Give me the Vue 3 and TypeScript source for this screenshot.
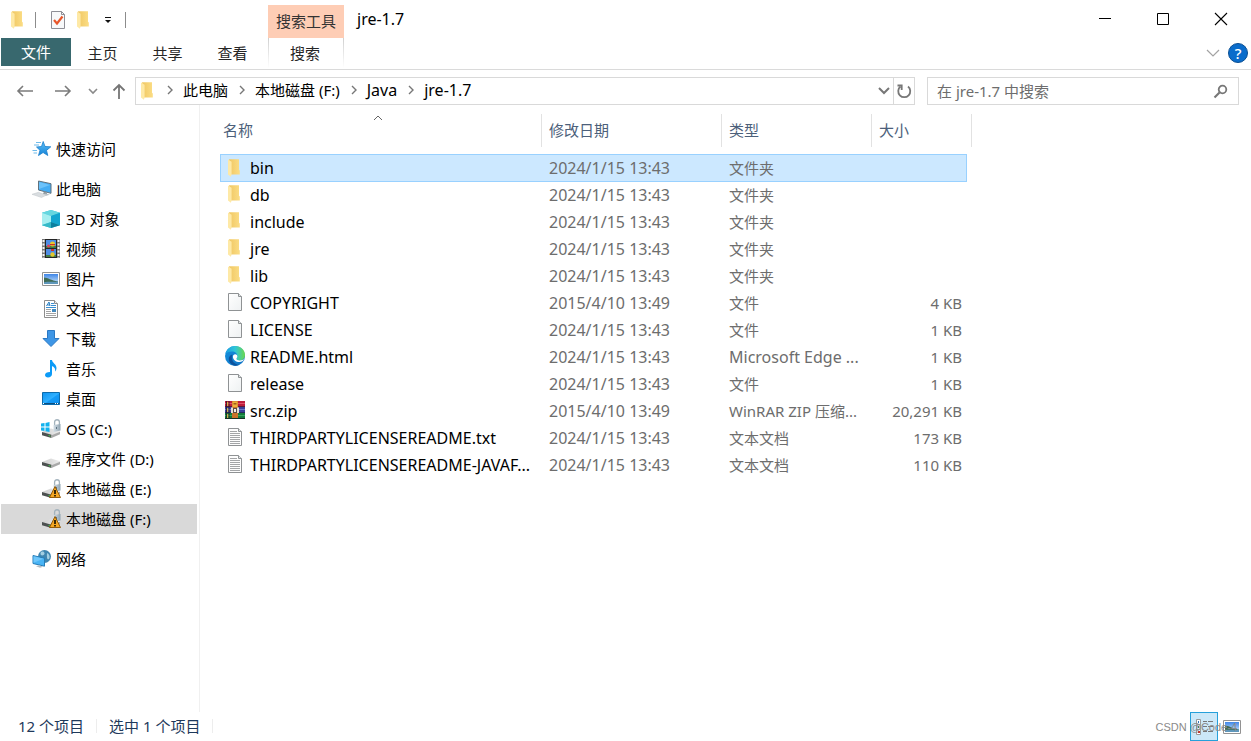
<script setup lang="ts">
import { ref } from 'vue'

interface NavItem {
  label: string
  icon: string
  level: number
  gap?: boolean
}
interface FileRow {
  name: string
  icon: string
  date: string
  type: string
  size: string
}

const title = 'jre-1.7'
const tabs: string[] = ['主页', '共享', '查看']
const crumbs: string[] = ['此电脑', '本地磁盘 (F:)', 'Java', 'jre-1.7']
const query = ref('')
const current = ref('本地磁盘 (F:)')
const selected = ref('bin')

const isLatin = (s: string): boolean => /^[\x20-\x7e]*$/.test(s)

const nav: NavItem[] = [
  { label: '快速访问', icon: 'star', level: 0 },
  { label: '此电脑', icon: 'pc', level: 0, gap: true },
  { label: '3D 对象', icon: 'cube', level: 1 },
  { label: '视频', icon: 'video', level: 1 },
  { label: '图片', icon: 'picture', level: 1 },
  { label: '文档', icon: 'doc', level: 1 },
  { label: '下载', icon: 'download', level: 1 },
  { label: '音乐', icon: 'music', level: 1 },
  { label: '桌面', icon: 'desktop', level: 1 },
  { label: 'OS (C:)', icon: 'osdrive', level: 1 },
  { label: '程序文件 (D:)', icon: 'drive', level: 1 },
  { label: '本地磁盘 (E:)', icon: 'warndrive', level: 1 },
  { label: '本地磁盘 (F:)', icon: 'warndrive', level: 1 },
  { label: '网络', icon: 'network', level: 0, gap: true },
]

const columns: string[] = ['名称', '修改日期', '类型', '大小']
const late = '2024/1/15 13:43'
const early = '2015/4/10 13:49'
const files: FileRow[] = [
  { name: 'bin', icon: 'folder', date: late, type: '文件夹', size: '' },
  { name: 'db', icon: 'folder', date: late, type: '文件夹', size: '' },
  { name: 'include', icon: 'folder', date: late, type: '文件夹', size: '' },
  { name: 'jre', icon: 'folder', date: late, type: '文件夹', size: '' },
  { name: 'lib', icon: 'folder', date: late, type: '文件夹', size: '' },
  { name: 'COPYRIGHT', icon: 'blank', date: early, type: '文件', size: '4 KB' },
  { name: 'LICENSE', icon: 'blank', date: late, type: '文件', size: '1 KB' },
  { name: 'README.html', icon: 'edge', date: late, type: 'Microsoft Edge ...', size: '1 KB' },
  { name: 'release', icon: 'blank', date: late, type: '文件', size: '1 KB' },
  { name: 'src.zip', icon: 'rar', date: early, type: 'WinRAR ZIP 压缩...', size: '20,291 KB' },
  { name: 'THIRDPARTYLICENSEREADME.txt', icon: 'text', date: late, type: '文本文档', size: '173 KB' },
  { name: 'THIRDPARTYLICENSEREADME-JAVAF...', icon: 'text', date: late, type: '文本文档', size: '110 KB' },
]
</script>

<template>
  <div class="window">
    <svg class="defs" aria-hidden="true">
      <defs>
        <linearGradient id="gFolder" x1="0" x2="1"><stop offset="0" stop-color="#f0c763" /><stop offset="1" stop-color="#fbdd85" /></linearGradient>
        <linearGradient id="gStar" x1="0" y1="0" x2="0" y2="1"><stop offset="0" stop-color="#5cc0f7" /><stop offset="1" stop-color="#1583d8" /></linearGradient>
        <linearGradient id="gSky" x1="0" y1="0" x2="0" y2="1"><stop offset="0" stop-color="#3f86e8" /><stop offset="1" stop-color="#d4ecfb" /></linearGradient>
        <linearGradient id="gDesk" x1="0" y1="0" x2="1" y2="1"><stop offset="0" stop-color="#0e93f0" /><stop offset="0.5" stop-color="#2fb0ff" /><stop offset="0.55" stop-color="#149bf8" /><stop offset="1" stop-color="#0f8fee" /></linearGradient>
        <linearGradient id="gPaper" x1="0" y1="0" x2="1" y2="1"><stop offset="0" stop-color="#ffffff" /><stop offset="1" stop-color="#eef1f2" /></linearGradient>
        <linearGradient id="gEdgeTop" x1="0" x2="1"><stop offset="0" stop-color="#1b9de2" /><stop offset="0.5" stop-color="#2fc6d8" /><stop offset="1" stop-color="#6bd84b" /></linearGradient>
        <linearGradient id="gEdgeLow" x1="0" y1="0" x2="1" y2="1"><stop offset="0" stop-color="#1390de" /><stop offset="1" stop-color="#1273c4" /></linearGradient>
        <linearGradient id="gLock" x1="0" x2="1"><stop offset="0" stop-color="#d3dee6" /><stop offset="1" stop-color="#8fa3b1" /></linearGradient>
        <linearGradient id="gDrive" x1="0" x2="1"><stop offset="0" stop-color="#cfcfcf" /><stop offset="1" stop-color="#ececec" /></linearGradient>
      </defs>
      <symbol id="i-folder" viewBox="0 0 20 20">
        <path d="M4 1.200h10v10.500l.8.900v4H6z" fill="url(#gFolder)" />
        <path d="M3 1.500 6.600 3.700v12.800l-.7 2.200L3 16.500z" fill="#fee9a6" />
      </symbol>
      <symbol id="i-blank" viewBox="0 0 20 20">
        <path d="M3.500 1.500h10l3 3v14h-13z" fill="url(#gPaper)" stroke="#8f9294" />
        <path d="M13.500 1.500v3h3" fill="#e2e5e6" stroke="#8f9294" />
      </symbol>
      <symbol id="i-text" viewBox="0 0 20 20">
        <path d="M3.500 1.500h10l3 3v14h-13z" fill="#fdfdfd" stroke="#8f9294" />
        <path d="M13.500 1.500v3h3" fill="#e2e5e6" stroke="#8f9294" />
        <path d="M5 4.500h7M5 6.500h10M5 8.500h10M5 10.500h10M5 12.500h10M5 14.500h10M5 16.500h10" stroke="#a3a5a7" fill="none" />
      </symbol>
      <symbol id="i-edge" viewBox="0 0 20 20">
        <circle cx="10" cy="10" r="10" fill="url(#gEdgeLow)" />
        <path d="M.3 8C1.500 3 5.300 0 10 0c6 0 10 4.300 10 9 0 3.500-2.500 5.500-5.500 5.500-2 0-3-.8-3-1.600 0-.7.9-1 .9-2.800C12.400 7.500 10 5.500 7 5.500 4 5.500 1.500 6.500.3 8z" fill="url(#gEdgeTop)" />
        <path d="M7.500 8.500c-2 4 .5 10 7 10.300-5 2.700-10.500-.8-10.700-5.500C3.700 11 5 9 7.500 8.500z" fill="#0d539d" />
        <path d="M10.200 8.200c1.500 0 2.300 1 2.200 2.400-.1 1-.9 1.400-.9 2.200 0 .9 1.200 1.700 3.200 1.700 2 0 3.600-.8 4.500-1.700-.8 2.200-2.700 3.300-4.700 3.300-3.600 0-6.600-2.300-6.600-5.300 0-1.500.9-2.600 2.300-2.600z" fill="#fff" />
      </symbol>
      <symbol id="i-rar" viewBox="0 0 20 20">
        <path d="M0 1h20v6H0z" fill="#bd1c3c" /><path d="M0 3h20v1H0z" fill="#e0506a" />
        <path d="M0 7h20v6H0z" fill="#39409a" /><path d="M0 9h20v1H0z" fill="#6b77c9" />
        <path d="M0 13h20v6H0z" fill="#137a3b" /><path d="M0 15h20v1H0z" fill="#36a35c" />
        <path d="M0 6.500h20M0 12.500h20" stroke="#1c1836" stroke-width=".6" />
        <path d="M1.500 1v18M4 1v18" stroke="#221b2a" stroke-width=".8" />
        <path d="M2.700 2v4M2.700 8v4M2.700 14v4" stroke="#e8c34a" />
        <path d="M7 1h6v18H7z" fill="#c9722a" /><path d="M7.500 1.500h5V7h-5z" fill="#eeb03c" />
        <path d="M8.500 3h3v1.500h-3z" fill="#a05c1c" />
        <path d="M6 7.500h2V13H6zM12 7.500h2V13h-2z" fill="#e4dfd6" /><path d="M8 8h4v5H8z" fill="#5b4c43" /><path d="M9 9h2v3H9z" fill="#f5f0e6" />
        <path d="M0 18.500h20" stroke="#163024" />
      </symbol>
      <symbol id="i-star" viewBox="0 0 20 20">
        <path d="M11.200 2.500 13 7.500l5.800.3-4.300 3.600 1.300 5.100-4.700-3-4.600 3L8 11.300 4.500 8l5-.5z" fill="url(#gStar)" stroke="#1a7fcb" stroke-width=".8" />
        <path d="M4 3.500h5M2 6h5M.5 11.500h4.500M1.500 14h3.500" stroke="#6fbbea" stroke-width="1" />
      </symbol>
      <symbol id="i-pc" viewBox="0 0 20 20">
        <path d="M6.500 2 19 4.700v9.600L6.500 11z" fill="#44acf3" stroke="#60717d" />
        <path d="M7 3 18 6 7 10z" fill="#6cc2fa" />
        <path d="m12 12.500 3 .8V16l-4-1z" fill="#8d989f" /><path d="M9.500 15.500 14 14.500l4 1.300-4 1z" fill="#b5bdc2" />
        <path d="m0 15.300 6.500-2 8 2.800-5 2.400z" fill="#d9dde0" stroke="#bfc5c9" stroke-width=".5" />
      </symbol>
      <symbol id="i-cube" viewBox="0 0 20 20">
        <path d="m10 1 9 2.800v12.400L10 19l-9-2.800V3.800z" fill="#35c3d6" />
        <path d="m1 3.800 9-2.800 9 2.800L10 7z" fill="#65d6df" /><path d="M1 3.800 10 7v6l-9 3z" fill="#a5eef0" />
        <path d="M10 7l9-3.200v12.400L10 13z" fill="#12a5cf" /><path d="m1 16.200 9-3.200v6z" fill="#37b9c7" /><path d="m10 13 9 3.200L10 19z" fill="#0c7f9e" />
      </symbol>
      <symbol id="i-video" viewBox="0 0 20 20">
        <path d="M1 0h18v19H1z" fill="#777" />
        <path d="M2.500 1v18M17.500 1v18" stroke="#f5f5f5" stroke-width="2" stroke-dasharray="2 1.500" />
        <path d="M4 0h12v19H4z" fill="#252525" /><path d="M5 1h10v8H5zM5 10h10v8H5z" fill="#4e8de4" />
        <path d="M5 7h10v2H5zM5 16h10v2H5z" fill="#407c45" />
        <circle cx="11.500" cy="5" r="2.500" fill="#e5c82c" /><path d="M9 5h5v1.200H9z" fill="#cf3128" />
        <circle cx="7.500" cy="7" r="1.500" fill="#e0415b" /><circle cx="11.500" cy="15.500" r="2.200" fill="#e5c82c" /><path d="M10 10h3v2h-3z" fill="#cf3128" />
      </symbol>
      <symbol id="i-picture" viewBox="0 0 20 20">
        <path d="M1.500 3.500h17v13h-17z" fill="#fff" stroke="#929292" />
        <path d="M3 5h14v10H3z" fill="url(#gSky)" /><path d="M3 8.500c4 0 7 3 14 4V15H3z" fill="#3f6b55" /><path d="M3 13.200c5-1 9-.2 14-.7V15H3z" fill="#5f97bb" />
      </symbol>
      <symbol id="i-doc" viewBox="0 0 20 20">
        <path d="M3.500 1.500h10l3 3v14h-13z" fill="#fff" stroke="#8d8d8d" /><path d="M13.500 1.500v3h3" fill="#eee" stroke="#8d8d8d" />
        <path d="m5.500 7 2.500-4 1 4M6.500 6H9" stroke="#247dc3" fill="none" />
        <path d="M10 4.500h3M10 6.500h5M5 8.500h10" stroke="#3a8ed0" /><path d="M5 10.500h5M5 12.500h5M5 14.500h10M5 16.500h10" stroke="#a3a3a3" /><path d="M11 10h4v3h-4z" fill="#4389bd" />
      </symbol>
      <symbol id="i-download" viewBox="0 0 20 20">
        <path d="M6.500 1.500h7v8H18l-8 8-8-8h4.500z" fill="#3e96e6" stroke="#2a78c4" />
      </symbol>
      <symbol id="i-music" viewBox="0 0 20 20">
        <path d="M9 1h2c.2 3 4.500 4 4.500 8 0 1.500-.7 3-1.500 3.500.8-3-1-4.500-3-5.500v8c0 2-1.800 3.500-4 3.500-1.700 0-3-.9-3-2.400C4 14 6 13 9 13z" fill="#0c9bf7" />
      </symbol>
      <symbol id="i-desktop" viewBox="0 0 20 20">
        <path d="M1.500 3.500h17v12h-17z" fill="url(#gDesk)" stroke="#0c6cad" /><path d="M2 14.500h16" stroke="#0b4f80" /><path d="M2 14.500h2M14 14.500h3" stroke="#fff" stroke-dasharray="1 1" />
      </symbol>
      <symbol id="i-base" viewBox="0 0 20 20">
        <path d="m1 13 9-3.500 9 2.800v.7l-8.500 4z" fill="url(#gDrive)" />
        <path d="m1 13 9.500 2.800V19L1 16.200z" fill="#4d5151" /><path d="M10.500 16.300 19 12.700v2.500L10.500 19z" fill="#a9a9a9" />
        <path d="m7.500 16.500 2 .6" stroke="#3fc94a" />
      </symbol>
      <symbol id="i-lock" viewBox="0 0 20 20">
        <path d="M13.600 6V3c0-3 4.800-3 4.800 0v3" stroke="#a3b3bd" stroke-width="1.300" fill="none" /><path d="M12.500 6 19.500 5v6.500l-7 1.500z" fill="url(#gLock)" /><path d="M15.500 8v2" stroke="#5c7382" />
      </symbol>
      <symbol id="i-drive" viewBox="0 0 20 20"><use href="#i-base" /></symbol>
      <symbol id="i-osdrive" viewBox="0 0 20 20">
        <use href="#i-base" /><use href="#i-lock" />
        <path d="M0 4.500 3.500 4v3.500H0zM4.500 3.900 8.500 3v4.500h-4zM0 8.500h3.500V12L0 11.500zM4.500 8.500h4V13l-4-.8z" fill="#12b2ee" />
      </symbol>
      <symbol id="i-warndrive" viewBox="0 0 20 20">
        <use href="#i-base" /><use href="#i-lock" />
        <path d="m14 7.500 5.500 11h-11z" fill="#f5a623" stroke="#8a5200" stroke-width=".9" /><path d="M14 11v4M14 16v1.500" stroke="#1b1300" stroke-width="1.700" />
      </symbol>
      <symbol id="i-network" viewBox="0 0 20 20">
        <circle cx="12.500" cy="7.500" r="6.500" fill="#3f86b0" /><path d="M9 3c2-1 3 0 3.500 1s-1 2.500-2.500 2.500S8 4 9 3zM15.500 4c1.500 1 2.500 3 2 5S15 10.500 15 8.500s-.5-3.500.5-4.500z" fill="#a3cfe2" />
        <path d="m1 6.500 11.500 2.700v8L1 14.500z" fill="#49b4f5" stroke="#267db8" /><path d="m1.500 7.200 10 2.500-10 4z" fill="#6fc6fa" /><path d="m4 17.300 3-1 4 1.500-3 1z" fill="#b4bdc3" />
      </symbol>
    </svg>

    <header>
      <div class="titlebar">
        <div class="quick">
          <svg class="ic"><use href="#i-folder" /></svg>
          <span class="bar"></span>
          <button class="plain" aria-label="属性">
            <svg class="ic" viewBox="0 0 20 20">
              <path d="M3.500 1.500h10l3 3v14h-13z" fill="#f8f9fa" stroke="#8f8f96" /><path d="M13.500 1.500v3h3" fill="none" stroke="#8f8f96" />
              <path d="m6 10 3 3.500 5.500-7" fill="none" stroke="#e8562a" stroke-width="2.200" />
            </svg>
          </button>
          <button class="plain" aria-label="新建文件夹"><svg class="ic"><use href="#i-folder" /></svg></button>
          <button class="plain more" aria-label="自定义快速访问工具栏">
            <svg width="8" height="8" viewBox="0 0 8 8"><path d="M1 1.500h6" stroke="#111" /><path d="M1 4h6L4 7z" fill="#111" /></svg>
          </button>
          <span class="bar"></span>
        </div>
        <div class="context">搜索工具</div>
        <h1>{{ title }}</h1>
        <div class="controls">
          <button aria-label="最小化"><svg width="14" height="14"><path d="M1 6.500h12" stroke="#000" /></svg></button>
          <button aria-label="最大化"><svg width="14" height="14"><path d="M1.500 1.500h11v11h-11z" stroke="#000" fill="none" /></svg></button>
          <button aria-label="关闭"><svg width="14" height="14"><path d="m1 1 12 12M13 1 1 13" stroke="#000" stroke-width="1.100" /></svg></button>
        </div>
      </div>
      <div class="ribbon">
        <button class="file">文件</button>
        <button v-for="t in tabs" :key="t" class="tab">{{ t }}</button>
        <button class="tab search-tab">搜索</button>
        <div class="ribbon-end">
          <button class="plain" aria-label="展开功能区"><svg width="14" height="8"><path d="m1 1 6 6 6-6" fill="none" stroke="#a3a3a3" stroke-width="1.200" /></svg></button>
          <button class="help" aria-label="帮助">?</button>
        </div>
      </div>
    </header>

    <div class="address-row">
      <div class="history">
        <button class="plain" aria-label="后退"><svg width="18" height="14"><path d="M17 7H2M7 2 2 7l5 5" fill="none" stroke="#7b7b7b" stroke-width="1.600" /></svg></button>
        <button class="plain" aria-label="前进"><svg width="18" height="14"><path d="M1 7h15M11 2l5 5-5 5" fill="none" stroke="#7b7b7b" stroke-width="1.600" /></svg></button>
        <button class="plain narrow" aria-label="最近位置"><svg width="10" height="7"><path d="m1 1 4 4 4-4" fill="none" stroke="#8a8a8a" stroke-width="1.600" /></svg></button>
        <button class="plain up" aria-label="上移"><svg width="14" height="16"><path d="M7 16V2M1.500 7.500 7 2l5.500 5.500" fill="none" stroke="#757575" stroke-width="1.800" /></svg></button>
      </div>
      <div class="address">
        <svg class="ic"><use href="#i-folder" /></svg>
        <nav class="crumbs" aria-label="路径">
          <template v-for="c in crumbs" :key="c">
            <svg class="sep" width="6" height="10"><path d="m1 1 4 4-4 4" fill="none" stroke="#777" stroke-width="1.400" /></svg>
            <a href="#" :class="{ latin: isLatin(c) }">{{ c }}</a>
          </template>
        </nav>
        <button class="plain drop" aria-label="以前的位置"><svg width="12" height="8"><path d="m1 1 5 5 5-5" fill="none" stroke="#777" stroke-width="2" /></svg></button>
        <button class="refresh" aria-label="刷新">
          <svg width="16" height="16"><path d="M4.500 3.500a6 6 0 1 0 7.500 0" fill="none" stroke="#777" stroke-width="1.800" /><path d="M1.500 2.500h4.200V7" fill="none" stroke="#777" stroke-width="1.800" /></svg>
        </button>
      </div>
      <label class="search">
        <input v-model="query" type="text" aria-label="搜索" placeholder="在 jre-1.7 中搜索" />
        <svg width="15" height="15"><circle cx="9.500" cy="5.500" r="3.800" fill="none" stroke="#777" stroke-width="1.800" /><path d="M6.500 8.500 1.500 13.500" stroke="#777" stroke-width="2.200" /></svg>
      </label>
    </div>

    <div class="body">
      <nav class="side" aria-label="导航窗格">
        <a
          v-for="n in nav"
          :key="n.label"
          href="#"
          :class="{ child: n.level === 1, gap: n.gap, current: n.label === current }"
          @click.prevent="current = n.label"
        >
          <svg class="ic"><use :href="'#i-' + n.icon" /></svg>
          <span>{{ n.label }}</span>
        </a>
      </nav>
      <main>
        <table>
          <colgroup><col class="c-name" /><col class="c-date" /><col class="c-type" /><col class="c-size" /><col class="c-end" /></colgroup>
          <thead>
            <tr>
              <th v-for="(c, i) in columns" :key="c" :colspan="i === 3 ? 2 : 1" scope="col">
                <button>{{ c }}</button>
                <svg v-if="i === 0" class="caret" width="10" height="6"><path d="m1 5 4-4 4 4" fill="none" stroke="#666" /></svg>
              </th>
            </tr>
          </thead>
          <tbody>
            <tr v-for="f in files" :key="f.name" :class="{ selected: f.name === selected }" @click="selected = f.name">
              <td><div class="name latin"><svg class="ic"><use :href="'#i-' + f.icon" /></svg><span>{{ f.name }}</span></div></td>
              <td class="latin">{{ f.date }}</td>
              <td :class="{ latin: isLatin(f.type) }">{{ f.type }}</td>
              <td class="size">{{ f.size }}</td>
              <td></td>
            </tr>
          </tbody>
        </table>
      </main>
    </div>

    <footer>
      <span class="count">12 个项目</span>
      <span class="count">选中 1 个项目</span>
      <div class="views">
        <button class="view on" aria-label="详细信息">
          <svg width="20" height="18">
            <path d="M2.500 1.500h4v5h-4zM2.500 6.500h4v5h-4zM2.500 11.500h4v5h-4z" fill="#fff" stroke="#999" />
            <path d="M4 3h1v2H4z" fill="#2f72b8" /><path d="M4 8h1v2H4z" fill="#37864a" /><path d="M4 13h2v2H4z" fill="#c9302c" />
            <path d="M9 3.500h4M14 3.500h5M9 8.500h4M14 8.500h5M9 13.500h4M14 13.500h5" stroke="#777" />
          </svg>
        </button>
        <button class="view" aria-label="大图标"><svg class="ic"><use href="#i-picture" /></svg></button>
      </div>
      <span class="mark">CSDN @Code-4</span>
    </footer>
  </div>
</template>

<style>
html,
body,
#app {
  height: 100%;
}
</style>

<style scoped>
.window {
  min-height: 100%;
  display: flex;
  flex-direction: column;
  background: #fff;
  color: #000;
  font: 15px/20px 'Noto Sans', 'Noto Sans CJK SC', sans-serif;
}
.defs {
  position: absolute;
  width: 0;
  height: 0;
}
button {
  font: inherit;
  color: inherit;
  background: none;
  border: 0;
  padding: 0;
}
a {
  color: inherit;
  text-decoration: none;
}
svg {
  display: block;
  flex: none;
}
.ic {
  width: 20px;
  height: 20px;
}
.latin {
  font-size: 16px;
}
.plain {
  display: flex;
  align-items: center;
  justify-content: center;
}
header {
  border-bottom: 1px solid #dadada;
}
.titlebar {
  display: flex;
  height: 38px;
}
.quick {
  display: flex;
  align-items: center;
  box-sizing: border-box;
  width: 268px;
  padding: 2px 0 0 8px;
}
.bar {
  width: 1px;
  height: 16px;
  background: #8c8c8c;
  margin: 0 12px 0 7px;
}
.quick .plain + .plain {
  margin-left: 6px;
}
.quick .more {
  width: 16px;
  margin-left: 3px;
}
.more + .bar {
  margin-left: 9px;
}
.context {
  width: 76px;
  margin-top: 5px;
  line-height: 33px;
  text-align: center;
  background: #fecdb5;
  color: #333;
}
h1 {
  margin: 0 0 0 13px;
  font-size: 16px;
  font-weight: 400;
  line-height: 38px;
}
.controls {
  display: flex;
  margin: 0 1px 0 auto;
}
.controls button {
  width: 58px;
  padding-right: 1px;
  display: flex;
  align-items: center;
  justify-content: center;
}
.ribbon {
  display: flex;
  height: 31px;
  padding-left: 1px;
  color: #262626;
}
.file {
  width: 70px;
  height: 28px;
  background: #38686e;
  color: #fff;
}
.tab {
  width: 65px;
  height: 30px;
  padding-right: 2px;
}
.search-tab {
  width: 76px;
  margin-left: 2px;
  border: solid transparent;
  border-width: 0 1px;
  border-image: linear-gradient(#d0d0d0, #fff) 0 1;
}
.ribbon-end {
  display: flex;
  align-items: center;
  gap: 8px;
  height: 30px;
  margin: 0 3px 0 auto;
}
.help {
  width: 20px;
  height: 20px;
  border-radius: 50%;
  border: 1px solid #0a4f93;
  background: #0a6ccb;
  color: #fff;
  font-weight: 500;
  line-height: 18px;
}
.address-row {
  display: flex;
  padding: 7px 12px 0 0;
  height: 28px;
}
.history {
  display: flex;
  width: 135px;
  box-sizing: border-box;
  padding-left: 16px;
}
.history .plain {
  width: 18px;
  margin-right: 20px;
}
.history .narrow {
  width: 10px;
  margin: 0 14px 0 -4px;
}
.history .up {
  width: 14px;
  margin: 0;
}
.address,
.search {
  display: flex;
  align-items: center;
  box-sizing: border-box;
  border: 1px solid #d9d9d9;
}
.address {
  flex: 1;
  padding-left: 2px;
}
.crumbs {
  display: flex;
  align-items: center;
  flex: 1;
  height: 24px;
  margin-left: -2px;
  padding-bottom: 2px;
}
.sep {
  margin: 0 10px 0 11px;
}
.drop {
  width: 18px;
}
.refresh {
  display: flex;
  align-items: center;
  justify-content: center;
  width: 21px;
  height: 26px;
  border-left: 1px solid #d9d9d9;
}
.search {
  width: 312px;
  margin-left: 12px;
  padding: 0 10px 0 9px;
}
.search input {
  flex: 1;
  min-width: 0;
  border: 0;
  padding: 0;
  font: inherit;
  outline: 0;
  background: none;
}
.search input::placeholder {
  color: #6d6d6d;
  opacity: 1;
}
.body {
  display: flex;
  flex: 1;
}
.side {
  box-sizing: border-box;
  width: 200px;
  padding: 29px 2px 0 1px;
  border-right: 1px solid #f0f0f0;
}
.side a {
  display: flex;
  align-items: center;
  height: 30px;
  padding-left: 31px;
  gap: 4px;
}
.side .child {
  padding-left: 40px;
  gap: 5px;
}
.side .gap {
  margin-top: 10px;
}
.side .current {
  background: #d9d9d9;
}
main {
  flex: 1;
  padding: 9px 0 0 20px;
}
table {
  width: 752px;
  table-layout: fixed;
  border-collapse: separate;
  border-spacing: 0;
}
.c-name {
  width: 322px;
}
.c-date {
  width: 180px;
}
.c-type {
  width: 150px;
}
.c-size {
  width: 95px;
}
.c-end {
  width: 5px;
}
th {
  position: relative;
  box-sizing: border-box;
  height: 33px;
  padding: 0 0 2px 7px;
  text-align: left;
  font-weight: 400;
  color: #4c607a;
  border-right: 1px solid #e2e2e2;
}
th:first-child {
  padding-left: 3px;
}
.caret {
  position: absolute;
  top: 1px;
  left: 153px;
}
tbody::before {
  content: '';
  display: block;
  height: 7px;
}
td {
  box-sizing: border-box;
  height: 27px;
  padding: 0 0 0 7px;
  color: #6d6d6d;
  white-space: nowrap;
}
td:last-child {
  padding: 0;
}
td:first-child {
  padding-left: 5px;
}
.name {
  display: flex;
  align-items: center;
  gap: 5px;
  color: #000;
}
.name .ic {
  margin-bottom: 1px;
}
.size {
  text-align: right;
  padding-right: 5px;
}
.selected td:not(:last-child) {
  background: #cce8ff;
  border-top: 1px solid #99d1ff;
  box-shadow: 0 1px #99d1ff;
}
.selected td:first-child {
  border-left: 1px solid #99d1ff;
  padding-left: 4px;
}
.selected .size {
  border-right: 1px solid #99d1ff;
}
footer {
  position: relative;
  display: flex;
  align-items: center;
  height: 29px;
  padding: 0 9px 0 18px;
  color: #1e395b;
}
.count {
  padding-right: 12px;
  margin: 0 12px 2px 0;
  line-height: 14px;
  border-right: 1px solid #ededed;
}
.views {
  display: flex;
  margin-left: auto;
  gap: 4px;
}
.view {
  display: flex;
  align-items: center;
  justify-content: center;
  box-sizing: border-box;
  width: 20px;
  height: 29px;
}
.on {
  width: 28px;
  background: #cce8f8;
  border: 1px solid #26a0da;
}
.mark {
  position: absolute;
  right: 14px;
  bottom: 4px;
  font: 11px/20px 'Liberation Sans', sans-serif;
  color: #8a8a8a;
}
</style>
